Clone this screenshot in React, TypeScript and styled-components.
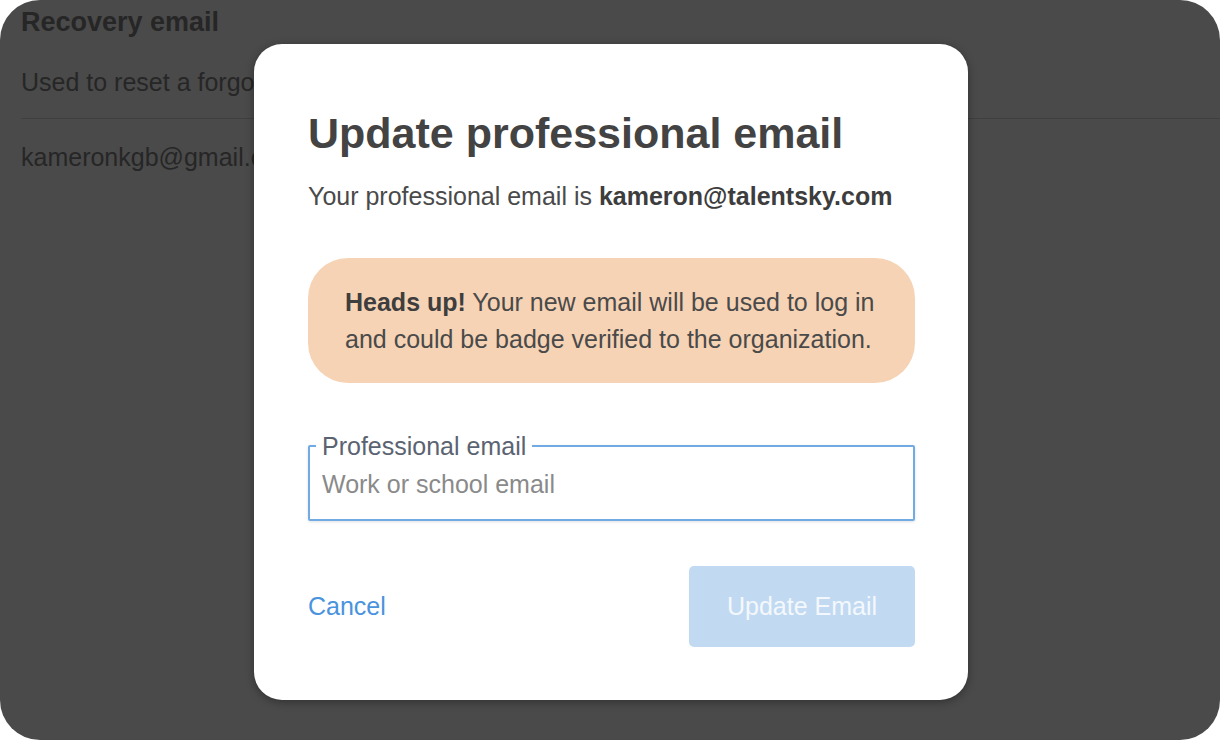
import React from 'react';
import styled, { createGlobalStyle } from 'styled-components';

const GlobalStyle = createGlobalStyle`
  html, body {
    margin: 0;
    padding: 0;
    background: #ffffff;
  }
  body {
    font-family: "Liberation Sans", Arial, Helvetica, sans-serif;
  }
`;

const Frame = styled.div`
  position: relative;
  width: 1220px;
  height: 740px;
  border-radius: 40px;
  background: #4a4a4a;
  overflow: hidden;
`;

const Page = styled.div`
  padding: 7px 0 0 21px;
  color: #262626;
`;

const SectionTitle = styled.h3`
  margin: 0;
  font-size: 27px;
  font-weight: 700;
  line-height: 30px;
`;

const SectionText = styled.p`
  margin: 30px 0 0;
  font-size: 25px;
  line-height: 30px;
`;

const Divider = styled.hr`
  margin: 21px 0 0;
  border: none;
  border-top: 1px solid #3f3f3f;
`;

const EmailValue = styled.p`
  margin: 23px 0 0;
  font-size: 25px;
  line-height: 30px;
`;

const Modal = styled.div`
  position: absolute;
  left: 254px;
  top: 44px;
  width: 714px;
  height: 656px;
  box-sizing: border-box;
  padding: 65px 53px 0 54px;
  background: #ffffff;
  border-radius: 28px;
  box-shadow: 0 2px 8px rgba(0, 0, 0, 0.35);
  color: #444444;
`;

const Title = styled.h2`
  margin: 0;
  font-size: 43px;
  font-weight: 700;
  line-height: 48px;
  color: #434343;
`;

const Subtitle = styled.p`
  margin: 24px 0 0;
  font-size: 25px;
  line-height: 30px;
  color: #4a4a4a;

  strong {
    color: #3d3d3d;
  }
`;

const Notice = styled.div`
  margin-top: 47px;
  padding: 26px 32px 25px 37px;
  border-radius: 40px;
  background: #f6d3b5;
  font-size: 25px;
  line-height: 37px;
  color: #4a4a4a;

  strong {
    color: #3e3e3e;
  }
`;

const Field = styled.fieldset`
  margin: 50px 0 0;
  padding: 0 12px;
  height: 88px;
  box-sizing: border-box;
  border: 2px solid #72aae3;
  border-radius: 2px;
  box-shadow: 0 1px 3px rgba(0, 0, 0, 0.12);
`;

const Legend = styled.legend`
  padding: 0 6px;
  margin-left: -6px;
  font-size: 25px;
  line-height: 26px;
  color: #5b6371;
`;

const Input = styled.input`
  display: block;
  width: 100%;
  margin-top: 11px;
  padding: 0;
  border: none;
  outline: none;
  background: transparent;
  font-family: inherit;
  font-size: 25px;
  line-height: 28px;
  color: #444444;

  &::placeholder {
    color: #8a8a8a;
  }
`;

const Actions = styled.div`
  display: flex;
  align-items: center;
  justify-content: space-between;
  margin-top: 45px;
`;

const CancelLink = styled.button`
  padding: 0;
  border: none;
  background: none;
  font-family: inherit;
  font-size: 25px;
  color: #4a93dd;
  cursor: pointer;
`;

const PrimaryButton = styled.button`
  width: 226px;
  height: 81px;
  border: none;
  border-radius: 5px;
  background: #c1daf2;
  font-family: inherit;
  font-size: 25px;
  color: #f4f8fc;
`;

export default function App() {
  return (
    <>
      <GlobalStyle />
      <Frame>
        <Page>
          <SectionTitle>Recovery email</SectionTitle>
          <SectionText>Used to reset a forgotten password</SectionText>
          <Divider />
          <EmailValue>kameronkgb@gmail.com</EmailValue>
        </Page>
        <Modal>
          <Title>Update professional email</Title>
          <Subtitle>
            Your professional email is <strong>kameron@talentsky.com</strong>
          </Subtitle>
          <Notice>
            <strong>Heads up!</strong> Your new email will be used to log in and could be badge
            verified to the organization.
          </Notice>
          <Field>
            <Legend>Professional email</Legend>
            <Input type="email" placeholder="Work or school email" />
          </Field>
          <Actions>
            <CancelLink>Cancel</CancelLink>
            <PrimaryButton disabled>Update Email</PrimaryButton>
          </Actions>
        </Modal>
      </Frame>
    </>
  );
}
